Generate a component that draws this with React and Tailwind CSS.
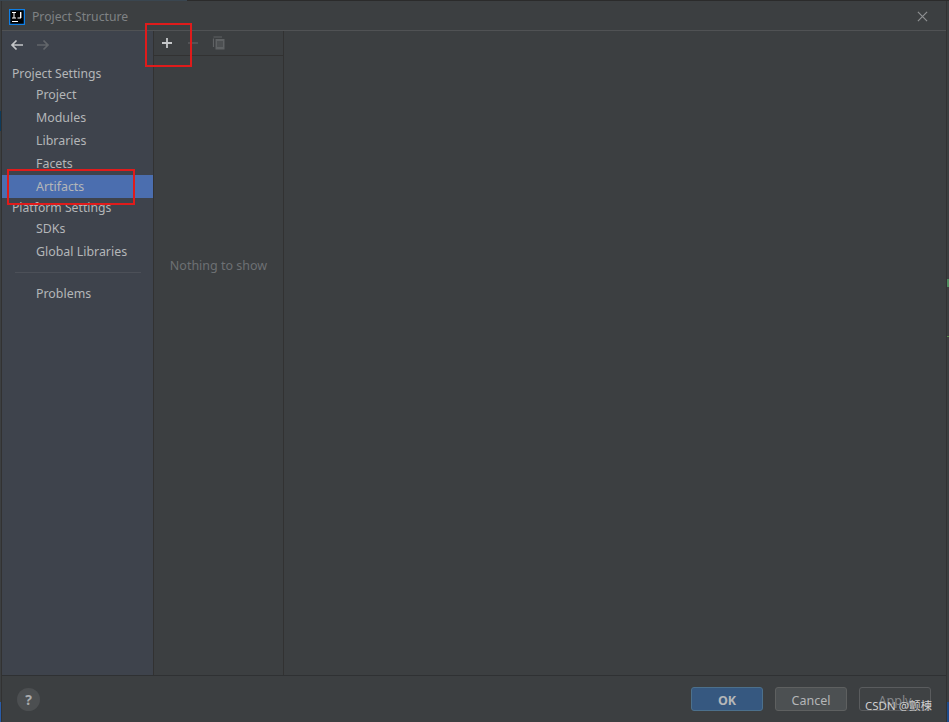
import React from "react";

const Item = ({ children, active, className = "" }) => (
  <div className={`h-[23px] flex items-center pl-[34px] pt-[2px] text-[12.4px] text-[#b4b6b8] ${active ? "bg-[#4b6eaf]" : ""} ${className}`}>
    {children}
  </div>
);

const Head = ({ children }) => (
  <div className="h-[19px] flex items-center pl-[10px] pt-[2px] text-[12.2px] text-[#b4b6b8]">{children}</div>
);

export default function App() {
  return (
    <div className="relative w-[949px] h-[722px] overflow-hidden bg-[#3c3f41] font-['Noto_Sans',sans-serif]">
      <div className="h-full flex flex-col ml-[1px] mr-[2px] border-x border-[#323232]">
        {/* Title bar */}
        <div className="h-[31px] shrink-0 flex items-center border-b border-[#505254] pl-[7px] pr-[18px] pt-[3px]">
          <svg width="16" height="16" viewBox="0 0 16 16" className="shrink-0">
            <rect x="0.6" y="0.6" width="14.8" height="14.8" fill="#000" stroke="#0f7fe6" strokeWidth="1.3" />
            <rect x="3" y="12" width="6" height="1" fill="#fff" />
            <rect x="3" y="3" width="4" height="1" fill="#fff" />
            <rect x="4.5" y="3" width="1" height="6" fill="#fff" />
            <rect x="3" y="8.5" width="4" height="1" fill="#fff" />
            <rect x="11" y="3" width="1.4" height="6" fill="#fff" />
            <rect x="8.5" y="8.5" width="3.5" height="1" fill="#fff" />
          </svg>
          <span className="ml-[7px] pt-[2px] text-[12.2px] text-[#7f8284]">Project Structure</span>
          <svg width="11" height="11" viewBox="0 0 12 12" className="ml-auto">
            <path d="M1 1l10 10M11 1L1 11" stroke="#8e9092" strokeWidth="1.3" fill="none" />
          </svg>
        </div>

        {/* Body */}
        <div className="flex-1 flex min-h-0 border-b border-[#2f3133]">
          {/* Sidebar */}
          <div className="w-[151px] shrink-0 bg-[#3e434c] border-r border-[#323232] box-content">
            <div className="h-[25px] flex items-center pl-[8px] gap-[12px] mt-[1px]">
              <svg width="14" height="12" viewBox="0 0 14 12">
                <path d="M13 6H2M6.5 1.5L2 6l4.5 4.5" stroke="#c4c6c8" strokeWidth="1.7" fill="none" />
              </svg>
              <svg width="14" height="12" viewBox="0 0 14 12">
                <path d="M1 6h11M7.5 1.5L12 6l-4.5 4.5" stroke="#62666a" strokeWidth="1.7" fill="none" />
              </svg>
            </div>
            <div className="mt-[7px]">
              <Head>Project Settings</Head>
              <Item>Project</Item>
              <Item>Modules</Item>
              <Item>Libraries</Item>
              <Item>Facets</Item>
              <Item active>Artifacts</Item>
              <Head>Platform Settings</Head>
              <Item>SDKs</Item>
              <Item>Global Libraries</Item>
              <div className="h-px bg-[#4c5058] mt-[9px] ml-[13px] mr-[12px]" />
              <Item className="mt-[9px]">Problems</Item>
            </div>
          </div>

          {/* List column */}
          <div className="w-[129px] shrink-0 flex flex-col border-r border-[#323232] box-content">
            <div className="h-[25px] shrink-0 flex items-center border-b border-[#323232] pl-[7px]">
              <svg width="12" height="12" viewBox="0 0 12 12">
                <path d="M6 1v10M1 6h10" stroke="#c6c8ca" strokeWidth="1.8" fill="none" />
              </svg>
              <svg width="12" height="12" viewBox="0 0 12 12" className="ml-[14px]">
                <path d="M1 6h10" stroke="#55585a" strokeWidth="1.7" fill="none" />
              </svg>
              <svg width="14" height="14" viewBox="0 0 14 14" className="ml-[13px]">
                <path d="M1.5 2.5V11M1.5 1H10" stroke="#5f6264" strokeWidth="1.2" fill="none" />
                <rect x="3.5" y="3" width="9" height="10.5" fill="#5f6264" />
                <path d="M5 6h6M5 8h6M5 10h6" stroke="#3c3f41" strokeWidth="1" />
              </svg>
            </div>
            <div className="flex-1 flex items-start justify-center pt-[201px] text-[12.5px] text-[#6d7073]">
              Nothing to show
            </div>
          </div>

          {/* Right pane */}
          <div className="flex-1 bg-[#3c3f41]" />
        </div>

        {/* Footer */}
        <div className="h-[46px] shrink-0 flex items-center pl-[15px] pr-[15px]">
          <div className="w-[23px] h-[23px] rounded-full bg-[#4c4f51] flex items-center justify-center text-[14px] font-bold text-[#a9abad]">?</div>
          <button className="ml-auto w-[72px] h-[24px] pt-[3px] rounded-[3px] bg-[#365880] border border-[#4c708c] text-[12.5px] leading-[18px] font-bold text-[#b4b6b8]">OK</button>
          <button className="ml-[12px] w-[72px] h-[24px] pt-[3px] rounded-[3px] bg-[#4c5052] border border-[#5e6060] text-[12.5px] leading-[18px] text-[#b4b6b8]">Cancel</button>
          <button className="ml-[12px] w-[72px] h-[24px] pt-[3px] rounded-[3px] bg-[#3f4244] border border-[#5a5c5e] text-[12.5px] leading-[18px] text-[#85878a]">Apply</button>
        </div>
      </div>

      {/* Annotation boxes */}
      <div className="absolute left-[145px] top-[23px] w-[47px] h-[44px] border-2 border-[#e01b1b]" />
      <div className="absolute left-[7px] top-[169px] w-[128px] h-[36px] border-2 border-[#e01b1b]" />
      {/* Watermark */}
      <div className="absolute left-[865px] top-[698px] text-[11.5px] leading-[16px] text-[#cfcfcf] font-['Noto_Sans','Noto_Sans_CJK_SC',sans-serif]">CSDN @颤楝</div>
      {/* Slivers of the window behind */}
      <div className="absolute left-0 top-0 w-[187px] h-px bg-[#3a4650]" />
      <div className="absolute left-[187px] right-0 top-0 h-px bg-[#2b2b2b]" />
      <div className="absolute left-0 top-[111px] w-px h-[20px] bg-[#0e3a5a]" />
      <div className="absolute left-0 top-[702px] w-px h-[20px] bg-[#2a5ca8]" />
      <div className="absolute right-0 top-[702px] w-[2px] h-[20px] bg-[#1d4a8a]" />
      <div className="absolute right-0 top-[279px] w-[2px] h-[8px] bg-[#4f8a5f]" />
      <div className="absolute right-0 top-[336px] w-[2px] h-[1px] bg-[#5a8a4f]" />
    </div>
  );
}
